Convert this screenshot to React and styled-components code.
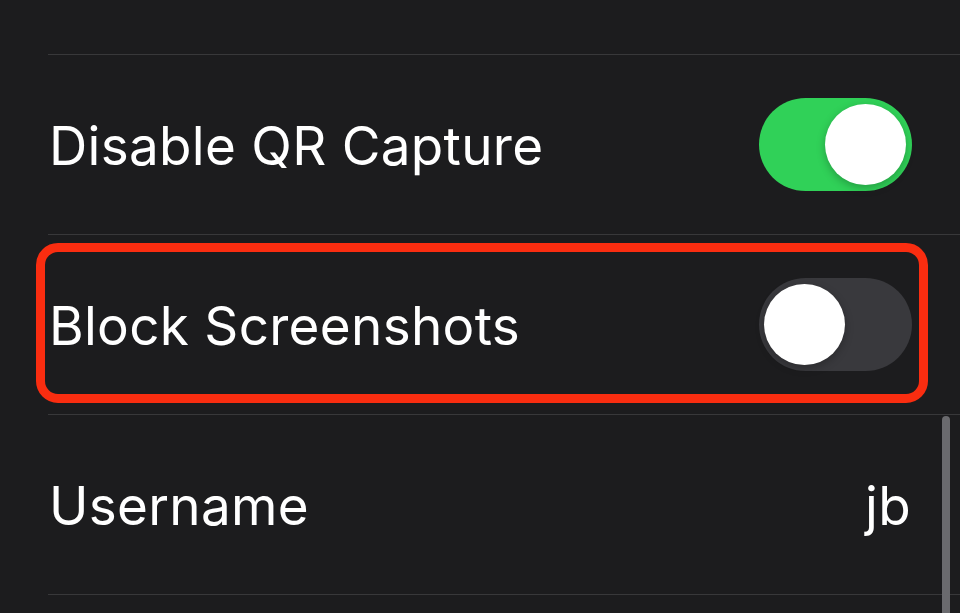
import React from 'react'
import styled, { createGlobalStyle } from 'styled-components'

const GlobalStyle = createGlobalStyle`
  html, body {
    margin: 0;
    padding: 0;
    background: #1c1c1e;
  }
  body {
    font-family: Inter, "Noto Sans", "Liberation Sans", sans-serif;
    -webkit-font-smoothing: antialiased;
  }
`

const Screen = styled.div`
  position: relative;
  width: 960px;
  height: 613px;
  overflow: hidden;
  background: #1c1c1e;
`

const List = styled.div`
  display: flex;
  flex-direction: column;
`

const TopSpacer = styled.div`
  height: 54px;
`

const Row = styled.div`
  position: relative;
  height: 179px;
  margin-left: 48px;
  padding: 0 48px 0 1px;
  border-top: 1px solid #38383a;
  display: flex;
  align-items: center;
  justify-content: space-between;
`

const Label = styled.span`
  color: #ffffff;
  font-size: 53px;
  font-weight: 400;
  letter-spacing: 0.3px;
  line-height: 1;
  padding-top: 4px;
`

const Value = styled(Label)`
  margin-right: 1px;
`

const Track = styled.div`
  position: relative;
  width: 153px;
  height: 93px;
  border-radius: 47px;
  background: ${p => (p.$on ? '#30d158' : '#39393d')};
  flex-shrink: 0;
`

const Knob = styled.div`
  position: absolute;
  top: 6px;
  left: ${p => (p.$on ? '66px' : '5px')};
  width: 81px;
  height: 81px;
  border-radius: 50%;
  background: #ffffff;
  box-shadow: 0 3px 8px rgba(0, 0, 0, 0.25);
`

const Highlight = styled.div`
  position: absolute;
  top: 8px;
  bottom: 11px;
  left: -12px;
  right: 32px;
  border: 9px solid #fa2d10;
  border-radius: 22px;
  pointer-events: none;
`

const ScrollBar = styled.div`
  position: absolute;
  left: 942px;
  top: 416px;
  width: 8px;
  height: 220px;
  border-radius: 4px;
  background: #6a6a6e;
`

const Toggle = ({ on }) => (
  <Track $on={on}>
    <Knob $on={on} />
  </Track>
)

export default function App() {
  return (
    <>
      <GlobalStyle />
      <Screen>
        <List>
          <TopSpacer />
          <Row>
            <Label>Disable QR Capture</Label>
            <Toggle on />
          </Row>
          <Row>
            <Label>Block Screenshots</Label>
            <Toggle on={false} />
            <Highlight />
          </Row>
          <Row>
            <Label>Username</Label>
            <Value>jb</Value>
          </Row>
          <Row />
        </List>
        <ScrollBar />
      </Screen>
    </>
  )
}
